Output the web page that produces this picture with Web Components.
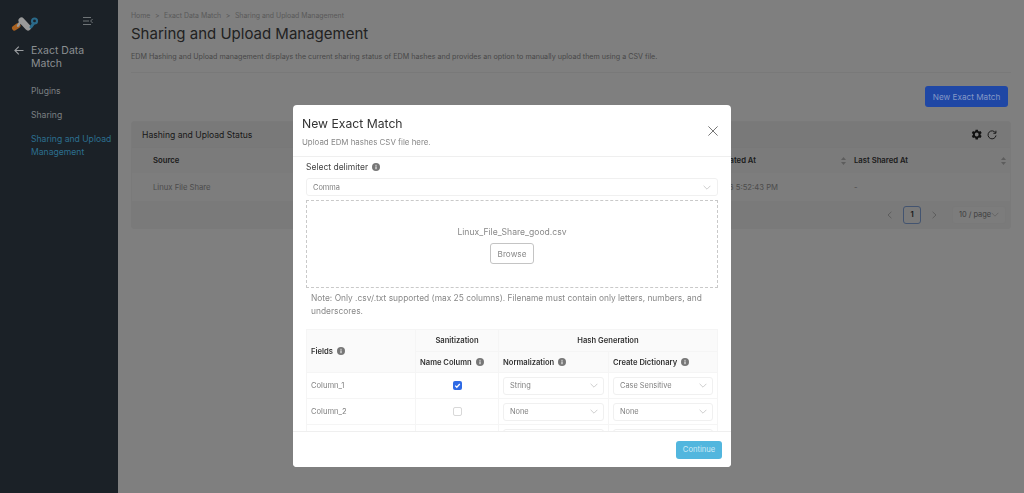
<!DOCTYPE html>
<html>
<head>
<meta charset="utf-8">
<title>Sharing and Upload Management</title>
<style>
   html, body { margin: 0; height: 100%; }
   body { font-family: Inter, "Liberation Sans", sans-serif; background: #fff; color: #333; overflow: hidden; }
   .page { display: flex; height: 493px; }
</style>
</head>
<body>
<div class="page">
   <app-sidebar></app-sidebar>
   <main-content></main-content>
</div>
<exact-match-modal></exact-match-modal>

<script>
const chevron = `<svg width="8" height="5" viewBox="0 0 8 5" fill="none" stroke="#c8c8c8" stroke-width=".9"><path d="M.6.8L4 4.2 7.4.8"/></svg>`;

class InfoIcon extends HTMLElement {
   constructor() {
      super();
      this.attachShadow({ mode: 'open' });
      this.shadowRoot.innerHTML = `
         <style>
            :host { display: inline-flex; vertical-align: -1px; margin-left: 4px; }
         </style>
         <svg width="8" height="8" viewBox="0 0 8 8">
            <circle cx="4" cy="4" r="4" fill="#777"/>
            <rect x="3.5" y="3.4" width="1" height="2.8" fill="#fff"/>
            <rect x="3.5" y="1.8" width="1" height="1" fill="#fff"/>
         </svg>`;
   }
}
customElements.define('info-icon', InfoIcon);

class SelectBox extends HTMLElement {
   constructor() {
      super();
      this.attachShadow({ mode: 'open' });
      this.shadowRoot.innerHTML = `
         <style>
            :host {
               display: flex;
               align-items: center;
               justify-content: space-between;
               box-sizing: border-box;
               height: 18px;
               padding: 0 6px 0 6px;
               border: 1px solid #f0f0f0;
               border-radius: 3px;
               background: #fff;
               color: #808080;
               font-size: 7.4px;
               white-space: nowrap;
            }
         </style>
         <slot></slot>${chevron}`;
   }
}
customElements.define('select-box', SelectBox);

const sidebarTemplate = document.createElement('template');
sidebarTemplate.innerHTML = `
   <style>
      /* sits above the modal backdrop, colours are the dimmed ones */
      :host {
         position: relative;
         z-index: 2;
         display: flex;
         flex-direction: column;
         flex: none;
         box-sizing: border-box;
         width: 118px;
         height: 100%;
         background: #1b2127;
         color: #7c8083;
      }
      .top {
         display: flex;
         align-items: center;
         justify-content: space-between;
         height: 30px;
         padding: 6px 25px 0 11px;
      }
      .title {
         display: flex;
         gap: 7px;
         margin-top: 8px;
         padding-left: 14px;
         font-size: 10.5px;
         line-height: 13px;
         color: #8b8f92;
      }
      .title svg { flex: none; margin-top: 2px; }
      nav {
         display: flex;
         flex-direction: column;
         gap: 11px;
         margin-top: 15px;
         padding-left: 31px;
         font-size: 8.6px;
         line-height: 13px;
      }
      .active { color: #2c6f8f; }
   </style>
   <div class="top">
      <svg width="28" height="22" viewBox="0 0 28 22" fill="none" stroke-linecap="round">
         <path d="M3.5 18L7 15.6" stroke="#a8601f" stroke-width="5"/>
         <path d="M7 15.6L10 11" stroke="#9a9a9a" stroke-width="2.5"/>
         <path d="M10.5 10.5L17 17.5" stroke="#9a9a9a" stroke-width="6"/>
         <path d="M20 17L22.5 13.5" stroke="#2a6a8a" stroke-width="3"/>
         <circle cx="23.5" cy="11" r="2.5" stroke="#2a6a8a" stroke-width="2.2"/>
      </svg>
      <svg width="10" height="8" viewBox="0 0 10 8" fill="none" stroke="#6f7477" stroke-width="1"><path d="M0 .5h8M0 4h6M0 7.5h8M9.6 2L7.6 4l2 2"/></svg>
   </div>
   <div class="title">
      <svg width="10" height="9" viewBox="0 0 10 9" fill="none" stroke="#9a9da0" stroke-width="1.1"><path d="M9.5 4.5H1M4.8.6L.9 4.5l3.9 3.9"/></svg>
      <span>Exact Data Match</span>
   </div>
   <nav>
      <span>Plugins</span>
      <span>Sharing</span>
      <span class="active">Sharing and Upload Management</span>
   </nav>
`;

class AppSidebar extends HTMLElement {
   constructor() {
      super();
      this.attachShadow({ mode: 'open' });
      this.shadowRoot.appendChild(sidebarTemplate.content.cloneNode(true));
   }
}
customElements.define('app-sidebar', AppSidebar);

const mainTemplate = document.createElement('template');
mainTemplate.innerHTML = `
   <style>
      :host {
         display: block;
         flex: 1;
         min-width: 0;
         box-sizing: border-box;
         padding: 11px 13px 0;
         background: #fff;
      }
      .crumbs { display: flex; gap: 4.6px; font-size: 6.9px; line-height: 9px; color: #b4b4b4; }
      h1 { margin: 2px 0 0; font-size: 15px; line-height: 24px; font-weight: 400; color: #444; }
      .desc { margin: 5px 0 0; padding-bottom: 9px; font-size: 7.17px; line-height: 12px; color: #909090; border-bottom: 1px solid #f2f2f2; white-space: nowrap; }
      .actions { display: flex; justify-content: flex-end; padding: 13px 3px 0 0; }
      /* keeps the saturated blue of the reference over the backdrop */
      button { position: relative; z-index: 2; box-sizing: border-box; width: 83px; height: 21px; border: 0; border-radius: 3px; background: #1f47a5; color: #8497c6; font: 8.2px Inter, sans-serif; padding: 0; }
      .card { margin-top: 14px; border: 1px solid #f4f4f4; border-radius: 3px; background: #f8f8f8; }
      .card-head { display: flex; align-items: center; justify-content: space-between; height: 25px; padding: 0 13px 0 10px; font-size: 8.6px; color: #333; background: #f3f3f3; }
      .tools { display: flex; gap: 4px; align-items: center; }
      table { width: 100%; border-collapse: collapse; table-layout: fixed; font-size: 7.7px; }
      th { height: 25px; text-align: left; font-weight: 600; color: #3a3a3a; background: #f6f6f6; padding: 0 0 0 21px; border-top: 1px solid #f0f0f0; }
      th span { display: flex; align-items: center; justify-content: space-between; padding-right: 4px; }
      td { height: 28px; padding: 0 0 0 21px; color: #999; background: #fafafa; }
      td.r { text-align: right; padding: 0 72px 0 0; }
      th.last, td.last { padding-left: 4px; }
      .foot { display: flex; align-items: center; justify-content: flex-end; height: 27px; padding-right: 4px; font-size: 7.6px; color: #555; background: #f4f4f4; }
      .pg { display: flex; align-items: center; justify-content: center; box-sizing: border-box; width: 18px; height: 18px; margin: 0 11px; border: 1px solid #86a8e0; border-radius: 3px; font-weight: 600; color: #333; }
      select-box { width: 54px; margin-left: 15px; border-color: #f3f3f3; background: #f8f8f8; }
   </style>
   <div class="crumbs"><span>Home</span><span>&gt;</span><span>Exact Data Match</span><span>&gt;</span><span>Sharing and Upload Management</span></div>
   <h1>Sharing and Upload Management</h1>
   <p class="desc">EDM Hashing and Upload management displays the current sharing status of EDM hashes and provides an option to manually upload them using a CSV file.</p>
   <div class="actions"><button>New Exact Match</button></div>
   <div class="card">
      <div class="card-head">
         <span>Hashing and Upload Status</span>
         <span class="tools">
            <svg width="13" height="13" viewBox="0 0 24 24" fill="#222"><path d="M19.4 13a7.6 7.6 0 0 0 0-2l2.2-1.7-2.2-3.7-2.6 1a7.6 7.6 0 0 0-1.7-1L14.6 3h-4.4l-.4 2.7a7.6 7.6 0 0 0-1.7 1l-2.6-1-2.2 3.7L5.5 11a7.6 7.6 0 0 0 0 2l-2.2 1.7 2.2 3.7 2.6-1a7.6 7.6 0 0 0 1.7 1l.4 2.6h4.4l.4-2.6a7.6 7.6 0 0 0 1.7-1l2.6 1 2.2-3.7zM12.4 15.5a3.5 3.5 0 1 1 0-7 3.5 3.5 0 0 1 0 7z"/></svg>
            <svg width="10" height="10" viewBox="0 0 11 11" fill="none" stroke="#333" stroke-width="1.1"><path d="M9.4 3.2A4.4 4.4 0 1 0 9.9 6"/><path d="M9.8 .8v2.8H7" /></svg>
         </span>
      </div>
      <table>
         <colgroup><col style="width:300px"><col><col style="width:160px"></colgroup>
         <tr>
            <th>Source</th>
            <th style="padding-left:0"><span style="justify-content:flex-end"><span style="padding-right:85px">Last Updated At</span>
               <svg width="5" height="8" viewBox="0 0 5 8" fill="#bbb"><path d="M2.5 0L5 3H0zM2.5 8L0 5h5z"/></svg></span></th>
            <th class="last"><span>Last Shared At <svg width="5" height="8" viewBox="0 0 5 8" fill="#bbb"><path d="M2.5 0L5 3H0zM2.5 8L0 5h5z"/></svg></span></th>
         </tr>
         <tr>
            <td>Linux File Share</td>
            <td class="r">01/26/2026 5:52:43 PM</td>
            <td class="last">-</td>
         </tr>
      </table>
      <div class="foot">
         <svg width="5" height="8" viewBox="0 0 5 8" fill="none" stroke="#bbb"><path d="M4.4.8L1 4l3.4 3.2"/></svg>
         <span class="pg">1</span>
         <svg width="5" height="8" viewBox="0 0 5 8" fill="none" stroke="#bbb"><path d="M.6.8L4 4 .6 7.2"/></svg>
         <select-box>10 / page</select-box>
      </div>
   </div>
`;

class MainContent extends HTMLElement {
   constructor() {
      super();
      this.attachShadow({ mode: 'open' });
      this.shadowRoot.appendChild(mainTemplate.content.cloneNode(true));
   }
}
customElements.define('main-content', MainContent);

const modalTemplate = document.createElement('template');
modalTemplate.innerHTML = `
   <style>
      :host {
         position: fixed;
         inset: 0;
         display: flex;
         justify-content: center;
         align-items: flex-start;
         padding-top: 105px;
         box-sizing: border-box;
         background: rgba(0, 0, 0, .5);
      }
      .modal {
         position: relative;
         z-index: 3;
         display: flex;
         flex-direction: column;
         width: 438px;
         height: 362px;
         border-radius: 4px;
         background: #fff;
         overflow: hidden;
      }
      header {
         display: flex;
         justify-content: space-between;
         flex: none;
         box-sizing: border-box;
         height: 52px;
         padding: 11px 13px 0 9px;
         border-bottom: 1px solid #efefef;
      }
      h2 { margin: 0; font-size: 12.2px; line-height: 16px; font-weight: 400; color: #333; }
      header p { margin: 4px 0 0; font-size: 7.9px; line-height: 12px; color: #888; }
      header svg { margin-top: 10px; }
      .body { flex: 1; min-height: 0; overflow: hidden; padding: 4px 13px 0; }
      label { display: block; font-size: 8.5px; line-height: 13px; color: #444; }
      .body > select-box { margin-top: 4px; }
      .drop {
         display: flex;
         flex-direction: column;
         align-items: center;
         box-sizing: border-box;
         height: 88px;
         margin-top: 4px;
         padding-top: 25px;
         border: 1px dashed #c9c9c9;
         font-size: 8.6px;
         line-height: 12px;
         color: #888;
      }
      .browse {
         display: flex;
         align-items: center;
         justify-content: center;
         box-sizing: border-box;
         width: 44px;
         height: 21px;
         margin-top: 5px;
         border: 1px solid #c4c4c4;
         border-radius: 3px;
         font-size: 8.2px;
      }
      .note { margin: 4px 0 0; padding: 0 5px; font-size: 8.4px; line-height: 13px; color: #888; }
      .note + table { margin-top: 11px; }
      table { width: 100%; border-collapse: collapse; table-layout: fixed; font-size: 7.6px; color: #808080; }
      th { height: 21px; padding: 0 0 0 4px; font-weight: 600; text-align: left; color: #333; background: #fafafa; border: 1px solid #f5f5f5; white-space: nowrap; }
      th.c { text-align: center; padding: 0; }
      tr.sub th { height: 20px; }
      td { height: 26px; padding: 0 4px; border: 1px solid #f5f5f5; box-sizing: border-box; }
      td.c { text-align: center; }
      td select-box { padding-right: 5px; }
      .check { display: inline-block; box-sizing: border-box; width: 9px; height: 9px; vertical-align: middle; border: 1px solid #d8d8d8; border-radius: 2px; }
      .check.on { border: 0; background: #2f6ae5; }
      .check svg { display: block; }
      footer { display: flex; justify-content: flex-end; align-items: center; flex: none; box-sizing: border-box; height: 36px; padding: 0 9px 0 0; border-top: 1px solid #efefef; background: #fff; }
      footer button { width: 46px; height: 18px; padding: 0; border: 0; border-radius: 3px; background: #52b6de; color: #cfeaf6; font: 7.6px Inter, sans-serif; }
   </style>
   <div class="modal">
      <header>
         <div>
            <h2>New Exact Match</h2>
            <p>Upload EDM hashes CSV file here.</p>
         </div>
         <svg width="10" height="10" viewBox="0 0 10 10" fill="none" stroke="#666" stroke-width=".9"><path d="M.4.4l9.2 9.2M9.6.4L.4 9.6"/></svg>
      </header>
      <div class="body">
         <label>Select delimiter<info-icon></info-icon></label>
         <select-box>Comma</select-box>
         <div class="drop">
            <span>Linux_File_Share_good.csv</span>
            <span class="browse">Browse</span>
         </div>
         <p class="note">Note: Only .csv/.txt supported (max 25 columns). Filename must contain only letters, numbers, and underscores.</p>
         <table>
            <colgroup><col style="width:109px"><col style="width:83px"><col style="width:110px"><col></colgroup>
            <tr>
               <th rowspan="2">Fields<info-icon></info-icon></th>
               <th class="c">Sanitization</th>
               <th class="c" colspan="2">Hash Generation</th>
            </tr>
            <tr class="sub">
               <th>Name Column<info-icon></info-icon></th>
               <th>Normalization<info-icon></info-icon></th>
               <th>Create Dictionary<info-icon></info-icon></th>
            </tr>
            <tr>
               <td>Column_1</td>
               <td class="c"><span class="check on"><svg width="9" height="9" viewBox="0 0 9 9" fill="none" stroke="#fff" stroke-width="1.3"><path d="M2.2 4.6l1.6 1.6 3-3.2"/></svg></span></td>
               <td><select-box>String</select-box></td>
               <td><select-box>Case Sensitive</select-box></td>
            </tr>
            <tr>
               <td>Column_2</td>
               <td class="c"><span class="check"></span></td>
               <td><select-box>None</select-box></td>
               <td><select-box>None</select-box></td>
            </tr>
            <tr>
               <td></td>
               <td class="c"></td>
               <td><select-box></select-box></td>
               <td><select-box></select-box></td>
            </tr>
         </table>
      </div>
      <footer><button>Continue</button></footer>
   </div>
`;

class ExactMatchModal extends HTMLElement {
   constructor() {
      super();
      this.attachShadow({ mode: 'open' });
      this.shadowRoot.appendChild(modalTemplate.content.cloneNode(true));
   }
}
customElements.define('exact-match-modal', ExactMatchModal);
</script>
</body>
</html>
